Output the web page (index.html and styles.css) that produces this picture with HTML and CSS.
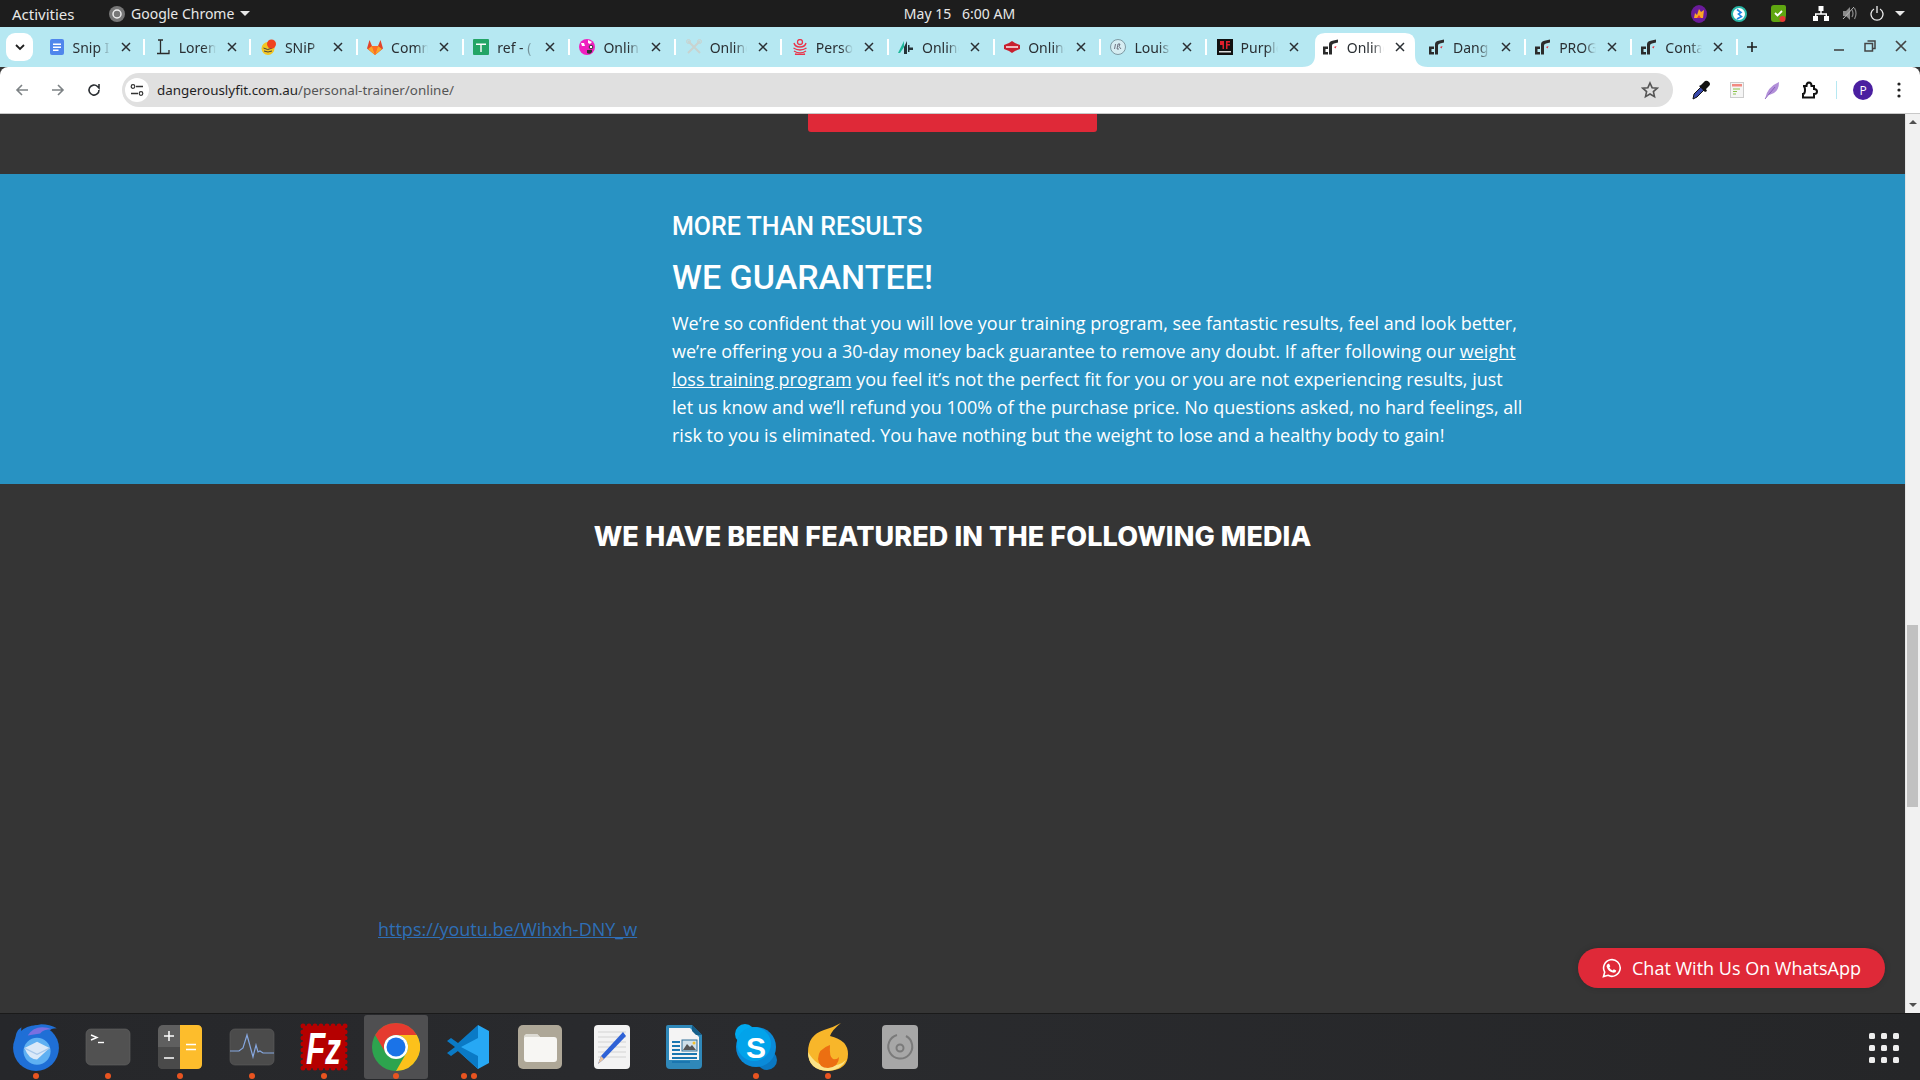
FILE: index.html
```html
<!DOCTYPE html>
<html lang="en">
<head>
    <meta charset="UTF-8">
    <meta name="viewport" content="width=device-width, initial-scale=1.0">
    <title>Online Personal Trainer</title>
    <link rel="stylesheet" href="styles.css">
</head>
<body>

    <svg class="defs" width="0" height="0">
        <symbol id="df" viewBox="0 0 16 16">
            <path d="M0 15.500V7.500h5V10H2.500v3H5v2.500zM6 15.500V5.500Q6 2.200 9.500 1.800L15 .500V3.500L11 4.500Q9 5 9 6.500v9z" fill="#2b2b2b"/>
            <path d="M11 8l2.500-1-1 2.500z" fill="#e8283a"/>
        </symbol>
        <symbol id="close" viewBox="0 0 10 10">
            <path d="M1 1l8 8M9 1L1 9" stroke="#2a2f33" stroke-width="1.500" fill="none"/>
        </symbol>
    </svg>

    <!-- ubuntu top bar -->
    <header class="topbar">
        <div class="topbar-left">
            <span class="activities">Activities</span>
            <svg class="app-logo" width="16" height="16" viewBox="0 0 16 16"><circle cx="8" cy="8" r="8" fill="#777"/><circle cx="8" cy="8" r="4" fill="none" stroke="#eee" stroke-width="1.500"/></svg>
            <span class="app-name">Google Chrome</span>
            <span class="caret"></span>
        </div>
        <div class="clock">May 15&nbsp;&nbsp; 6:00 AM</div>
        <div class="tray">
            <svg class="tray-a" width="16" height="18" viewBox="0 0 16 18"><ellipse cx="8" cy="9" rx="8" ry="9" fill="#6a1b9a"/><path d="M3 13l1-5 2 2 2-6 2 3 3-2-1 8z" fill="#f9a825"/><path d="M6 13l2-3 2 3z" fill="#e53935"/></svg>
            <svg class="tray-b" width="16" height="16" viewBox="0 0 16 16"><circle cx="8" cy="8" r="7" fill="#fff" stroke="#29b6a6" stroke-width="2"/><path d="M6 3.500l4 3-2.500 1.500 3 2.500-4.500 2.500" fill="none" stroke="#1e88e5" stroke-width="1.600"/></svg>
            <svg class="tray-c" width="17" height="19" viewBox="0 0 17 19"><path d="M1 4q0-3 3-3h10q2 0 2 2v8q0 7-7 7H4q-3 0-3-3z" fill="#5fa611"/><path d="M5 9l2.500 2.500L12 7" fill="none" stroke="#fff" stroke-width="1.800"/><circle cx="12.500" cy="15" r="3" fill="#e53935"/></svg>
            <svg class="tray-d" width="16" height="15" viewBox="0 0 16 15"><path d="M5.500 0h5v5h-5zM0 10h5v5H0zM11 10h5v5h-5zM7.300 5h1.400v2.300h5.300V10h-1.400V8.700H3.400V10H2V7.300h5.300z" fill="#fff"/></svg>
            <svg class="tray-e" width="15" height="15" viewBox="0 0 15 15"><path d="M1 5h3l4-4v13l-4-4H1z" fill="#8a8a8a"/><path d="M10 4q2 3.500 0 7M12.500 2q3 5.500 0 11" fill="none" stroke="#8a8a8a" stroke-width="1.200"/><path d="M1 13L12 1" stroke="#bbb" stroke-width="1"/></svg>
            <svg class="tray-f" width="14" height="15" viewBox="0 0 14 15"><path d="M4 3a6 6 0 1 0 6 0M7 0v7" fill="none" stroke="#eee" stroke-width="1.300"/></svg>
            <span class="caret"></span>
        </div>
    </header>

    <!-- chrome tab strip -->
    <div class="tabstrip">
        <div class="tab-search">
            <svg width="10" height="7" viewBox="0 0 10 7"><path d="M1 1l4 4 4-4" fill="none" stroke="#1f1f1f" stroke-width="1.800"/></svg>
        </div>
        <div class="tab">
            <svg class="fav" viewBox="0 0 16 16"><rect x="1" width="14" height="16" rx="2" fill="#4f86ec"/><path d="M4 4.500h8v1.500H4zM4 7.500h8V9H4zM4 10.500h5.500V12H4z" fill="#fff"/></svg>
            <span class="tab-title">Snip I</span>
            <svg class="tab-x"><use href="#close"/></svg>
        </div>
        <div class="tab">
            <svg class="fav" viewBox="0 0 16 16"><path d="M3 1h5M5.500 1v13.500M2 14.500h12V11" fill="none" stroke="#2b2b2b" stroke-width="1.300"/></svg>
            <span class="tab-title">Lorem</span>
            <svg class="tab-x"><use href="#close"/></svg>
        </div>
        <div class="tab">
            <svg class="fav" viewBox="0 0 16 16"><circle cx="7" cy="9.500" r="6.500" fill="#f3c623"/><path d="M2.500 9q4 3 9 0M3 12q4 2 8 0" fill="none" stroke="#444" stroke-width="1"/><circle cx="10.500" cy="5" r="4.500" fill="#f0441e"/></svg>
            <span class="tab-title">SNiP</span>
            <svg class="tab-x"><use href="#close"/></svg>
        </div>
        <div class="tab">
            <svg class="fav" viewBox="0 0 16 16"><path d="M8 16L0 9.500 2.500 1l2.500 6h6l2.500-6L16 9.500z" fill="#e24329"/><path d="M8 16L5 7h6z" fill="#fc6d26"/><path d="M8 16L1 10l4-3zM8 16l7-6-4-3z" fill="#fca326"/></svg>
            <span class="tab-title">Comm</span>
            <svg class="tab-x"><use href="#close"/></svg>
        </div>
        <div class="tab">
            <svg class="fav" viewBox="0 0 16 16"><rect width="16" height="16" rx="1" fill="#23a566"/><path d="M3 4.500h10V6H8.700v7H7.300V6H3z" fill="#fff"/></svg>
            <span class="tab-title">ref - (</span>
            <svg class="tab-x"><use href="#close"/></svg>
        </div>
        <div class="tab">
            <svg class="fav" viewBox="0 0 16 16"><circle cx="8" cy="8" r="8" fill="#f01fc0"/><path d="M2 4h3l1 3H3zM9 1l4 2-2 2-2-1z" fill="#fff"/><path d="M8 11h5v2q-2 3-5 1z" fill="#333"/><circle cx="12" cy="8" r="1.800" fill="#fff" stroke="#333"/></svg>
            <span class="tab-title">Online</span>
            <svg class="tab-x"><use href="#close"/></svg>
        </div>
        <div class="tab">
            <svg class="fav" viewBox="0 0 16 16"><path d="M2 2l12 12M14 2L2 14" stroke="#c9d3cf" stroke-width="2"/><circle cx="2.500" cy="2.500" r="2" fill="none" stroke="#c9d3cf"/><circle cx="13.500" cy="2.500" r="2" fill="none" stroke="#c9d3cf"/></svg>
            <span class="tab-title">Online</span>
            <svg class="tab-x"><use href="#close"/></svg>
        </div>
        <div class="tab">
            <svg class="fav" viewBox="0 0 16 16"><circle cx="8" cy="3" r="2.500" fill="none" stroke="#e9344a" stroke-width="1.300"/><path d="M2 4q1 4 6 4t6-4M1.500 9q6.500 4 13 0M2 12q6 4 12 0M3 15q5 1.500 10 0" fill="none" stroke="#e9344a" stroke-width="1.400"/></svg>
            <span class="tab-title">Person</span>
            <svg class="tab-x"><use href="#close"/></svg>
        </div>
        <div class="tab">
            <svg class="fav" viewBox="0 0 16 16"><path d="M0 14L6 2v6L2 14z" fill="#1fb89b"/><path d="M6 15V8l3-6v13zM10 6h1.500v2.500H15V11h-3.500v2H10z" fill="#263238"/></svg>
            <span class="tab-title">Online</span>
            <svg class="tab-x"><use href="#close"/></svg>
        </div>
        <div class="tab">
            <svg class="fav" viewBox="0 0 16 16"><path d="M5 4l3-2 3 2 5 2v4l-5 2-3 2-3-2-5-2V6z" fill="#c8202f"/><path d="M2 8h12" stroke="#fff" stroke-width="1.400"/></svg>
            <span class="tab-title">Online</span>
            <svg class="tab-x"><use href="#close"/></svg>
        </div>
        <div class="tab">
            <svg class="fav" viewBox="0 0 16 16"><circle cx="8" cy="8" r="7.500" fill="#d6edf2" stroke="#7e9aa3"/><path d="M5.500 5l-1 5M8 5l-1 5h2M8 5h2l-1 2.500 2 2.500" fill="none" stroke="#556" stroke-width=".8"/></svg>
            <span class="tab-title">Louis</span>
            <svg class="tab-x"><use href="#close"/></svg>
        </div>
        <div class="tab tab-nosep">
            <svg class="fav" viewBox="0 0 16 16"><rect width="16" height="16" fill="#111"/><path d="M3 2h4v8H5.500V6H3zM9 2h4v1.500h-2.500v1.500H13v1.500h-2.500V10H9z" fill="#e0202c"/><path d="M2 12h12v1.500H2z" fill="#ddd"/></svg>
            <span class="tab-title">Purple</span>
            <svg class="tab-x"><use href="#close"/></svg>
        </div>
        <div class="tab tab-active tab-nosep">
            <svg class="tab-shape" width="126" height="34" viewBox="0 0 126 34"><path d="M0 34Q13 34 13 22V10Q13 0 23 0H103Q113 0 113 10V22Q113 34 126 34z" fill="#fff"/></svg>
            <svg class="fav" viewBox="0 0 16 16"><use href="#df"/></svg>
            <span class="tab-title">Online</span>
            <svg class="tab-x"><use href="#close"/></svg>
        </div>
        <div class="tab">
            <svg class="fav" viewBox="0 0 16 16"><use href="#df"/></svg>
            <span class="tab-title">Dang</span>
            <svg class="tab-x"><use href="#close"/></svg>
        </div>
        <div class="tab">
            <svg class="fav" viewBox="0 0 16 16"><use href="#df"/></svg>
            <span class="tab-title">PROG</span>
            <svg class="tab-x"><use href="#close"/></svg>
        </div>
        <div class="tab">
            <svg class="fav" viewBox="0 0 16 16"><use href="#df"/></svg>
            <span class="tab-title">Conta</span>
            <svg class="tab-x"><use href="#close"/></svg>
        </div>
        <svg class="new-tab" width="12" height="12" viewBox="0 0 12 12"><path d="M6 1v10M1 6h10" stroke="#1f1f1f" stroke-width="1.600"/></svg>
        <div class="win-btns">
            <svg width="12" height="12" viewBox="0 0 12 12"><path d="M1 10h10" stroke="#444" stroke-width="1.600"/></svg>
            <svg width="12" height="12" viewBox="0 0 12 12"><path d="M3.500 1h7.500v7.500H8.500" fill="none" stroke="#444" stroke-width="1.500"/><rect x="1" y="3.500" width="7.500" height="7.500" fill="none" stroke="#444" stroke-width="1.500"/></svg>
            <svg width="12" height="12" viewBox="0 0 12 12"><path d="M1 1l10 10M11 1L1 11" stroke="#444" stroke-width="1.700"/></svg>
        </div>
    </div>

    <!-- chrome toolbar -->
    <div class="toolbar">
        <svg class="nav-btn" viewBox="0 0 16 16"><path d="M14 8H3M8 3L3 8l5 5" fill="none" stroke="#7d8285" stroke-width="1.600"/></svg>
        <svg class="nav-btn" viewBox="0 0 16 16"><path d="M2 8h11M8 3l5 5-5 5" fill="none" stroke="#7d8285" stroke-width="1.600"/></svg>
        <svg class="nav-btn" viewBox="0 0 16 16"><path d="M13 8a5 5 0 1 1-1.500-3.500L13 6V2" fill="none" stroke="#2b2f33" stroke-width="1.600"/></svg>
        <div class="urlbar">
            <span class="site-info">
                <svg width="14" height="14" viewBox="0 0 14 14"><path d="M6 3.500h7M1 10.500h7" stroke="#333" stroke-width="1.300"/><circle cx="3" cy="3.500" r="1.800" fill="none" stroke="#333" stroke-width="1.200"/><circle cx="11" cy="10.500" r="1.800" fill="none" stroke="#333" stroke-width="1.200"/></svg>
            </span>
            <span class="url"><span class="url-host">dangerouslyfit.com.au</span>/personal-trainer/online/</span>
            <svg class="star" width="18" height="18" viewBox="0 0 18 18"><path d="M9 2l2.100 4.700 5.100.5-3.800 3.400 1.100 5L9 13l-4.500 2.600 1.100-5L1.800 7.200l5.100-.5z" fill="none" stroke="#555" stroke-width="1.600"/></svg>
        </div>
        <div class="tool-icons">
            <svg width="18" height="20" viewBox="0 0 18 20"><path d="M1 19l1-5 8-8 3 3-8 8z" fill="#3949ab" stroke="#111"/><path d="M9 5l4-4q2-1 4 1t0 4l-3 3 1 2-2 1-6-6z" fill="#111"/></svg>
            <svg width="14" height="16" viewBox="0 0 14 16"><rect x=".5" y=".5" width="13" height="15" fill="#f5f5f5" stroke="#ccc"/><path d="M2 2h10v2.500H2z" fill="#f28b82"/><path d="M3 7h7M3 9.500h4M3 12h3" stroke="#8bc34a" stroke-width="1.200"/></svg>
            <svg width="16" height="19" viewBox="0 0 16 19"><path d="M1 18Q3 6 15 1q0 8-5 11-4 2-6 2z" fill="#b18fd8"/><path d="M1 18L11 6" stroke="#7b4fb5" stroke-width=".8"/></svg>
            <svg width="18" height="18" viewBox="0 0 18 18"><path d="M3 5h3.500q0-3.500 2.500-3.500T11.500 5H14v3q3 0 3 2.500T14 13v3.500H3V13q2 0 2-4T3 5z" fill="none" stroke="#111" stroke-width="2"/></svg>
        </div>
        <span class="tool-sep"></span>
        <span class="avatar">P</span>
        <svg class="menu-dots" width="4" height="16" viewBox="0 0 4 16"><circle cx="2" cy="2" r="1.600" fill="#222"/><circle cx="2" cy="8" r="1.600" fill="#222"/><circle cx="2" cy="14" r="1.600" fill="#222"/></svg>
    </div>

    <!-- page content -->
    <div class="viewport">
        <main class="page">
            <section class="top-strip">
                <div class="cta-stub"></div>
            </section>
            <section class="guarantee">
                <h3 class="guarantee-kicker">MORE THAN RESULTS</h3>
                <h2 class="guarantee-title">WE GUARANTEE!</h2>
                <p class="guarantee-text">We’re so confident that you will love your training program, see fantastic results, feel and look better, we’re offering you a 30-day money back guarantee to remove any doubt. If after following our <a href="#">weight loss training program</a> you feel it’s not the perfect fit for you or you are not experiencing results, just let us know and we’ll refund you 100% of the purchase price. No questions asked, no hard feelings, all risk to you is eliminated. You have nothing but the weight to lose and a healthy body to gain!</p>
            </section>
            <section class="media">
                <h2 class="media-title">WE HAVE BEEN FEATURED IN THE FOLLOWING MEDIA</h2>
                <a class="media-link" href="#">https://youtu.be/Wihxh-DNY_w</a>
            </section>
            <a class="whatsapp" href="#">
                <svg width="20" height="20" viewBox="0 0 20 20"><path d="M1.500 18.500l1.200-4.400A8.300 8.300 0 1 1 6 17.300z" fill="none" stroke="#fff" stroke-width="1.600"/><path d="M7 5.500l1.300 2.700-1 1.200q1 2 3.300 3l1.200-1.200 2.500 1.300q-.3 2.200-2.600 2.200-5.700-1-7.200-6.500 0-2.200 2.500-2.700z" fill="#fff"/></svg>
                Chat With Us On WhatsApp
            </a>
        </main>
        <div class="scrollbar">
            <span class="arrow-up"></span>
            <span class="thumb"></span>
            <span class="arrow-down"></span>
        </div>
    </div>

    <!-- ubuntu dock -->
    <footer class="dock">
        <div class="dock-item">
            <svg class="dock-bird" width="50" height="50" viewBox="0 0 48 48"><circle cx="24" cy="26" r="22" fill="#1f6fd6"/><path d="M4 22Q3 10 10 6q-1 6 2 9 4-11 17-12 8 0 15 4-6 0-8 3 8 8 8 16H4z" fill="#1f6fd6"/><path d="M16 14q5-8 14-8 5 0 9 2-8 0-11 4z" fill="#7a6fe0"/><circle cx="25" cy="29" r="13" fill="#5fb0f2"/><path d="M13 26l12-6 12 6-12 11q-8 0-12-11z" fill="#dbe9f8"/><path d="M13 26l12 6 12-6" fill="none" stroke="#a9c8ea" stroke-width="1.200"/></svg>
            <span class="dot"></span>
        </div>
        <div class="dock-item">
            <svg width="48" height="48" viewBox="0 0 48 48"><rect x="2" y="6" width="44" height="36" rx="5" fill="#515151" stroke="#666" stroke-width=".6"/><path d="M7 12l6 2.500-6 2.500" fill="none" stroke="#fff" stroke-width="1.400"/><path d="M14 19.500h6" stroke="#fff" stroke-width="1.400"/></svg>
            <span class="dot"></span>
        </div>
        <div class="dock-item">
            <svg width="48" height="48" viewBox="0 0 48 48"><rect x="2" y="2" width="44" height="44" rx="5" fill="#5f5f5f"/><path d="M2 24h22v22H7q-5 0-5-5z" fill="#4a4a4a"/><path d="M24 2h17q5 0 5 5v34q0 5-5 5H24z" fill="#fdbd2c"/><path d="M13 8v10M8 13h10M8 35h10" stroke="#fff" stroke-width="1.500"/><path d="M30 21.500h10M30 26.500h10" stroke="#fff" stroke-width="1.500"/></svg>
            <span class="dot"></span>
        </div>
        <div class="dock-item">
            <svg width="48" height="48" viewBox="0 0 48 48"><rect x="2" y="6" width="44" height="36" rx="5" fill="#4b4b4b" stroke="#5e5e5e" stroke-width=".6"/><path d="M2 28h9l4-3 4-13 6 22 3-12 2 7 2-1 3 2h11" fill="none" stroke="#86a7df" stroke-width="1.200"/></svg>
            <span class="dot"></span>
        </div>
        <div class="dock-item">
            <svg width="48" height="48" viewBox="0 0 48 48"><rect x="3" y="3" width="42" height="42" fill="#b50000" stroke="#b50000" stroke-width="5" stroke-linecap="round" stroke-dasharray="0 6"/><rect x="3" y="3" width="42" height="42" fill="#b50000"/><text x="6" y="41" class="fz-text" textLength="35" lengthAdjust="spacingAndGlyphs">Fz</text></svg>
            <span class="dot"></span>
        </div>
        <div class="dock-item dock-active">
            <svg width="48" height="48" viewBox="0 0 48 48"><circle cx="24" cy="24" r="24" fill="#2da44e"/><path d="M24 0A24 24 0 0 1 44.800 12H24A12 12 0 0 0 13.600 30L3.200 12A24 24 0 0 1 24 0z" fill="#e53b2f"/><path d="M24 12H44.800A24 24 0 0 1 24 48L34.400 30A12 12 0 0 0 24 12z" fill="#fcc11b"/><circle cx="24" cy="24" r="12" fill="#fff"/><circle cx="24" cy="24" r="9.500" fill="#1a73e8"/></svg>
            <span class="dot"></span>
        </div>
        <div class="dock-item">
            <svg width="44" height="48" viewBox="0 0 44 48"><path d="M32 2L43 8v32l-11 6-22-20 22-16z" fill="#27a8f4"/><path d="M32 2v13L15 24l17 9v13L12 28 5 33 1 30l8-6-8-6 4-3 7 5z" fill="#0a7ac6"/></svg>
            <span class="dot"></span><span class="dot dot-second"></span>
        </div>
        <div class="dock-item">
            <svg width="48" height="48" viewBox="0 0 48 48"><rect x="2" y="2" width="44" height="44" rx="5" fill="#aea797"/><path d="M8 15q0-4 4-4h9l3 3h14q3 0 3 3v19q0 3-3 3H11q-3 0-3-3z" fill="#f7f6f3"/><path d="M8 15q0-4 4-4h9l3 3H9z" fill="#dcdad3"/></svg>
            <span class="dot dot-hidden"></span>
        </div>
        <div class="dock-item">
            <svg width="38" height="48" viewBox="0 0 38 48"><rect x="1" y="2" width="36" height="44" rx="4" fill="#f3f3f3"/><path d="M5 9h28M5 14h28M5 19h28M5 24h28M5 29h28M5 34h28" stroke="#d3d3d3"/><path d="M33 13l-22 23-6 5 3-8 22-24z" fill="#2f62d6"/><path d="M11 36l-6 5 3-8z" fill="#e8c39e"/></svg>
            <span class="dot dot-hidden"></span>
        </div>
        <div class="dock-item">
            <svg width="38" height="48" viewBox="0 0 38 48"><path d="M3 2h24l10 10v30q0 4-4 4H5q-4 0-4-4V4q0-2 2-2z" fill="#2f88b9"/><path d="M4 5h21l9 9v23H4z" fill="#f4f4f4"/><path d="M27 2l10 10h-6l-4-4z" fill="#155f8a"/><path d="M7 18h8v2H7zM7 22h8v2H7zM7 26h8v2H7zM7 30h25v2H7zM7 34h25v2H7zM7 38h18v2H7z" fill="#1a76b0"/><rect x="17" y="17" width="15" height="11" fill="#cfe0ea" stroke="#2f6f98"/><path d="M18 27l4-6 3 3 2-2 4 5z" fill="#555"/><circle cx="29" cy="20" r="1.500" fill="#f2c12e"/></svg>
            <span class="dot dot-hidden"></span>
        </div>
        <div class="dock-item">
            <svg width="44" height="48" viewBox="0 0 44 48"><circle cx="11" cy="11" r="10" fill="#00a9ef"/><circle cx="33" cy="37" r="10" fill="#0a78c2"/><circle cx="22" cy="24" r="20" fill="#0a8bd9"/><circle cx="20" cy="21" r="17" fill="#02a3ea"/><text x="22" y="35" class="skype-text">S</text></svg>
            <span class="dot"></span>
        </div>
        <div class="dock-item">
            <svg width="40" height="48" viewBox="0 0 40 48"><path d="M33 0Q24 7 22 13q18 4 18 18 0 16-20 17Q0 47 0 29 0 12 16 7 26 4 33 0z" fill="#f8b62a"/><path d="M0 29q0 18 20 19 13-1 18-11-6 6-18 6T0 29z" fill="#fbe488"/><path d="M22 22q-12 4-12 14 1 9 10 9 11-1 11-11-2 3-6 2-4-2-3-14z" fill="#ec6f12"/></svg>
            <span class="dot"></span>
        </div>
        <div class="dock-item">
            <svg width="36" height="48" viewBox="0 0 36 48"><rect y="2" width="36" height="44" rx="4" fill="#a7a7a7"/><path d="M24 13a12 12 0 1 1-9-1" fill="none" stroke="#7a7a7a" stroke-width="2"/><circle cx="18" cy="25" r="3.500" fill="none" stroke="#7a7a7a" stroke-width="2"/></svg>
            <span class="dot dot-hidden"></span>
        </div>
        <div class="app-grid">
            <span></span><span></span><span></span>
            <span></span><span></span><span></span>
            <span></span><span></span><span></span>
        </div>
    </footer>

</body>
</html>
```

FILE: styles.css
```css
* {
    box-sizing: border-box;
}
html, body {
    margin: 0;
    width: 1920px;
    height: 1080px;
    overflow: hidden;
}
body {
    font-family: "Open Sans", sans-serif;
    display: flex;
    flex-direction: column;
    background-color: #353535;
}
.defs {
    position: absolute;
}

/* top bar */
.topbar {
    height: 27px;
    background-color: #1d1d1d;
    color: #e8e8e8;
    font-family: "Noto Sans", sans-serif;
    font-size: 14px;
    display: grid;
    grid-template-columns: 1fr auto 1fr;
    align-items: center;
    padding: 0 15px 0 12px;
}
.topbar-left {
    display: flex;
    align-items: center;
}
.activities {
    width: 97px;
    font-size: 15px;
}
.app-name {
    margin-left: 6px;
}
.caret {
    width: 0;
    height: 0;
    border-left: 5px solid transparent;
    border-right: 5px solid transparent;
    border-top: 5px solid #e8e8e8;
    margin-left: 6px;
}
.clock {
    margin-right: -2px;
}
.tray {
    display: flex;
    align-items: center;
    justify-content: flex-end;
}
.tray-a { margin-right: 24px; }
.tray-b { margin-right: 23px; }
.tray-c { margin-right: 26px; }
.tray-d { margin-right: 13px; }
.tray-e { margin-right: 13px; }
.tray-f { margin-right: 5px; }

/* tabs */
.tabstrip {
    height: 40px;
    background-color: #b6e8f2;
    display: flex;
    align-items: flex-end;
    padding-left: 6px;
    position: relative;
    font-family: "Noto Sans", sans-serif;
}
.tab-search {
    width: 27px;
    height: 28px;
    background-color: #fff;
    border-radius: 9px;
    margin-right: 5px;
    margin-bottom: 6px;
    display: flex;
    align-items: center;
    justify-content: center;
}
.tab {
    width: 106.2px;
    height: 34px;
    padding: 0 0 6px 10.5px;
    display: flex;
    align-items: center;
    position: relative;
    flex-shrink: 0;
}
.tab::after {
    content: "";
    position: absolute;
    right: -1px;
    top: 6px;
    width: 2px;
    height: 16px;
    background-color: #fff;
}
.tab-nosep::after {
    display: none;
}
.tab-active .tab-shape {
    position: absolute;
    left: -10px;
    top: 0;
}
.fav {
    width: 16px;
    height: 16px;
    flex-shrink: 0;
    position: relative;
}
.tab-title {
    width: 37px;
    margin-left: 8px;
    font-size: 14px;
    color: #2a2f33;
    white-space: nowrap;
    overflow: hidden;
    -webkit-mask-image: linear-gradient(to right, #000 68%, transparent);
    mask-image: linear-gradient(to right, #000 68%, transparent);
    position: relative;
}
.tab-x {
    width: 10px;
    height: 10px;
    margin-left: 11px;
    position: relative;
}
.new-tab {
    margin-left: 9px;
    margin-bottom: 14px;
}
.win-btns {
    position: absolute;
    right: 13px;
    top: 13px;
    display: flex;
    gap: 19px;
}

/* toolbar */
.toolbar {
    height: 47px;
    background-color: #fff;
    border-radius: 8px 8px 0 0;
    border-bottom: 1px solid #c8c8c8;
    display: flex;
    align-items: center;
    padding-left: 14px;
    position: relative;
}
.nav-btn {
    width: 16px;
    height: 16px;
    margin-right: 20px;
}
.nav-btn:nth-of-type(3) {
    margin-right: 21px;
}
.urlbar {
    width: 1551px;
    height: 34px;
    background-color: #e0e0e0;
    border-radius: 17px;
    display: flex;
    align-items: center;
    padding: 0 14px 0 3px;
    margin-left: -1px;
}
.site-info {
    width: 24px;
    height: 24px;
    background-color: #fff;
    border-radius: 50%;
    display: flex;
    align-items: center;
    justify-content: center;
}
.url {
    margin-left: 8px;
    font-family: "Noto Sans", sans-serif;
    font-size: 13.4px;
    color: #555;
}
.url-host {
    color: #1f1f1f;
}
.star {
    margin-left: auto;
}
.tool-icons {
    display: flex;
    align-items: center;
    width: 126px;
    margin-left: 19px;
    justify-content: space-between;
}
.tool-sep {
    width: 1px;
    height: 18px;
    background-color: #b6e8f2;
    margin-left: 18px;
}
.avatar {
    width: 20px;
    height: 20px;
    border-radius: 50%;
    background-color: #4a1fa0;
    color: #fff;
    font-size: 12px;
    display: flex;
    align-items: center;
    justify-content: center;
    margin-left: 16px;
}
.menu-dots {
    margin-left: 24px;
}

/* page */
.viewport {
    height: 899px;
    display: flex;
}
.page {
    width: 1905px;
    position: relative;
    overflow: hidden;
}
.top-strip {
    height: 60px;
    background-color: #353535;
    display: flex;
    justify-content: center;
}
.cta-stub {
    width: 289px;
    height: 18px;
    background-color: #df2938;
    border-radius: 0 0 3px 3px;
}
.guarantee {
    height: 310px;
    background-color: #2892c2;
    color: #fff;
    padding: 37px 0 0 672px;
}
.guarantee-kicker {
    font-family: Roboto, sans-serif;
    font-weight: 500;
    font-size: 25px;
    line-height: 32px;
    margin: 0 0 15px;
}
.guarantee-title {
    font-family: Roboto, sans-serif;
    font-weight: 500;
    font-size: 34px;
    line-height: 38px;
    margin: 0 0 13px;
}
.guarantee-text {
    width: 854px;
    font-size: 18px;
    line-height: 28px;
    margin: 0;
}
.guarantee-text a {
    color: #fff;
}
.media {
    height: 529px;
    background-color: #353535;
}
.media-title {
    font-family: Inter, sans-serif;
    font-weight: 800;
    font-size: 27px;
    letter-spacing: 0.1px;
    line-height: 32px;
    color: #fff;
    text-align: center;
    margin: 0;
    padding-top: 37px;
}
.media-link {
    display: inline-block;
    margin: 362px 0 0 378px;
    font-size: 18px;
    line-height: 28px;
    color: #2e6fb7;
}
.whatsapp {
    position: absolute;
    left: 1578px;
    top: 834px;
    width: 307px;
    height: 40px;
    border-radius: 20px;
    background-color: #df2938;
    color: #fff;
    font-size: 18px;
    text-decoration: none;
    display: flex;
    align-items: center;
    gap: 10px;
    padding-left: 24px;
    box-shadow: 0 0 6px rgba(0, 0, 0, 0.15);
}
.scrollbar {
    width: 15px;
    background-color: #f1f1f1;
    position: relative;
    border-left: 1px solid #e4e4e4;
}
.arrow-up, .arrow-down {
    position: absolute;
    left: 3px;
    width: 0;
    height: 0;
    border-left: 4px solid transparent;
    border-right: 4px solid transparent;
}
.arrow-up {
    top: 6px;
    border-bottom: 4px solid #505050;
}
.arrow-down {
    bottom: 6px;
    border-top: 4px solid #505050;
}
.thumb {
    position: absolute;
    left: 1px;
    top: 511px;
    width: 11px;
    height: 182px;
    background-color: #c1c1c1;
}

/* dock */
.dock {
    height: 67px;
    background: linear-gradient(to right, #26272a, #2a2b2e 40%, #252628);
    border-top: 1px solid #1a1a1a;
    display: flex;
    align-items: flex-start;
    padding-top: 1px;
}
.dock-item {
    width: 64px;
    height: 64px;
    margin: 0 4px;
    padding-top: 8px;
    display: flex;
    flex-direction: column;
    align-items: center;
    border-radius: 3px;
    position: relative;
}
.dock-active {
    background-color: #4f4f51;
}
.dock-bird {
    margin-top: -2px;
}
.dot {
    width: 6px;
    height: 6px;
    border-radius: 50%;
    background-color: #e95420;
    margin-top: 2px;
}
.dot-hidden {
    visibility: hidden;
}
.dock-item:nth-child(7) .dot {
    margin-left: -9px;
}
.dot-second {
    position: absolute;
    left: 35px;
    top: 58px;
    margin: 0 !important;
}
.fz-text {
    font-family: "Liberation Sans", sans-serif;
    font-weight: 700;
    font-style: italic;
    font-size: 44px;
    fill: #fff;
}
.skype-text {
    font-family: "Liberation Sans", sans-serif;
    font-weight: 700;
    font-size: 30px;
    fill: #fff;
    text-anchor: middle;
}
.app-grid {
    margin-left: auto;
    margin-right: 21px;
    margin-top: 18px;
    display: grid;
    grid-template-columns: repeat(3, 6px);
    gap: 6px;
}
.app-grid span {
    height: 6px;
    border-radius: 1.5px;
    background-color: #eee;
}
```
